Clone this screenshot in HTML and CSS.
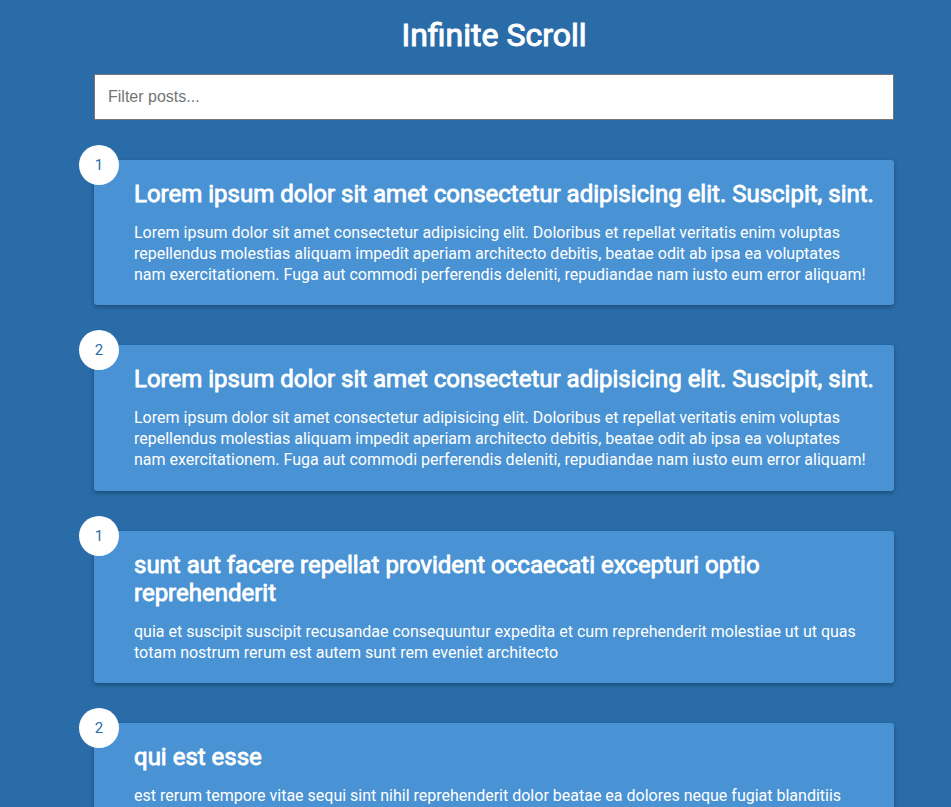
FILE: index.html
```html
<!DOCTYPE html>
<html lang="en">
<head>
<meta charset="UTF-8">
<title>Infinite Scroll</title>
<link rel="stylesheet" href="styles.css">
</head>
<body>
<main class="page">
  <h1 class="title">Infinite Scroll</h1>
  <div class="filter-container">
    <input type="text" class="filter" placeholder="Filter posts...">
  </div>
  <div class="posts">
    <article class="post">
      <div class="number">1</div>
      <div class="post-info">
        <h2 class="post-title">Lorem ipsum dolor sit amet consectetur adipisicing elit. Suscipit, sint.</h2>
        <p class="post-body">Lorem ipsum dolor sit amet consectetur adipisicing elit. Doloribus et repellat veritatis enim voluptas repellendus molestias aliquam impedit aperiam architecto debitis, beatae odit ab ipsa ea voluptates nam exercitationem. Fuga aut commodi perferendis deleniti, repudiandae nam iusto eum error aliquam!</p>
      </div>
    </article>
    <article class="post">
      <div class="number">2</div>
      <div class="post-info">
        <h2 class="post-title">Lorem ipsum dolor sit amet consectetur adipisicing elit. Suscipit, sint.</h2>
        <p class="post-body">Lorem ipsum dolor sit amet consectetur adipisicing elit. Doloribus et repellat veritatis enim voluptas repellendus molestias aliquam impedit aperiam architecto debitis, beatae odit ab ipsa ea voluptates nam exercitationem. Fuga aut commodi perferendis deleniti, repudiandae nam iusto eum error aliquam!</p>
      </div>
    </article>
    <article class="post">
      <div class="number">1</div>
      <div class="post-info">
        <h2 class="post-title">sunt aut facere repellat provident occaecati excepturi optio reprehenderit</h2>
        <p class="post-body">quia et suscipit suscipit recusandae consequuntur expedita et cum reprehenderit molestiae ut ut quas totam nostrum rerum est autem sunt rem eveniet architecto</p>
      </div>
    </article>
    <article class="post">
      <div class="number">2</div>
      <div class="post-info">
        <h2 class="post-title">qui est esse</h2>
        <p class="post-body">est rerum tempore vitae sequi sint nihil reprehenderit dolor beatae ea dolores neque fugiat blanditiis voluptate porro vel nihil molestiae ut reiciendis qui aperiam non debitis possimus qui neque nisi nulla</p>
      </div>
    </article>
  </div>
</main>
</body>
</html>
```

FILE: styles.css
```css
* {
  box-sizing: border-box;
}

body {
  margin: 0;
  background-color: #296ca8;
  color: #fff;
  font-family: Roboto, "Noto Sans", sans-serif;
  padding-bottom: 100px;
}

.page {
  width: 800px;
  margin-left: 94px;
}

.title {
  margin: 16px 0 0;
  font-size: 32px;
  font-weight: 400;
  -webkit-text-stroke: 1px #fff;
  text-align: center;
}

.filter-container {
  margin-top: 20px;
}

.filter {
  display: block;
  width: 100%;
  padding: 13px;
  font-size: 16px;
  font-family: "Liberation Sans", Arial, sans-serif;
  border: 1px solid #767676;
  box-shadow: inset 0 0 0 1px #fff;
  outline: none;
}

.filter::placeholder {
  color: #757575;
}

.post {
  position: relative;
  display: flex;
  background-color: #4992d3;
  box-shadow: 0 2px 4px rgba(0, 0, 0, 0.3);
  border-radius: 3px;
  padding: 20px;
  margin: 40px 0;
}

.post-info {
  margin-left: 20px;
}

.post-title {
  margin: 0;
  font-size: 24px;
  font-weight: 400;
  -webkit-text-stroke: 0.85px #fff;
}

.post-body {
  margin: 15px 0 0;
  font-size: 16px;
  line-height: 1.3;
}

.number {
  position: absolute;
  top: -15px;
  left: -15px;
  width: 40px;
  height: 40px;
  border-radius: 50%;
  background: #fff;
  color: #296ca8;
  font-size: 15px;
  display: flex;
  align-items: center;
  justify-content: center;
}
```
